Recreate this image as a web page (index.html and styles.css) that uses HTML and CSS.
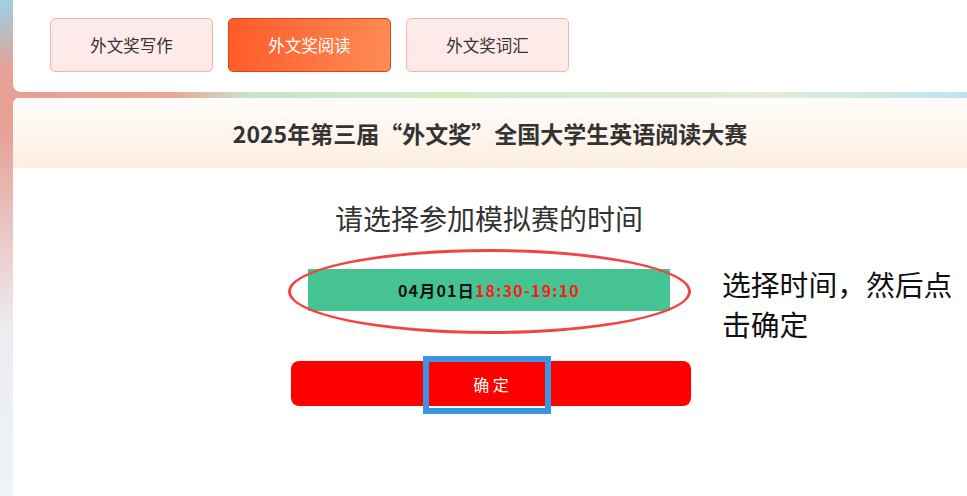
FILE: index.html
```html
<!DOCTYPE html>
<html lang="zh-CN">
<head>
  <meta charset="UTF-8" />
  <title>外文奖模拟赛</title>
  <link rel="stylesheet" href="styles.css">
</head>
<body>

  <!-- Tabs -->
  <div class="top-panel">
    <button class="tab">外文奖写作</button>
    <button class="tab active">外文奖阅读</button>
    <button class="tab">外文奖词汇</button>
  </div>

  <!-- Main -->
  <div class="main-panel">
    <div class="banner">2025年第三届“外文奖”全国大学生英语阅读大赛</div>

    <div class="content">
      <div class="subtitle">请选择参加模拟赛的时间</div>

      <div class="slot-wrap">
        <div class="slot">04月01日<span class="slot-time">18:30-19:10</span></div>
        <div class="mark-ellipse"></div>
      </div>

      <div class="confirm-wrap">
        <button class="confirm-btn">确 定</button>
        <div class="mark-box"></div>
      </div>
    </div>

    <div class="note">选择时间，然后点击确定</div>
  </div>

</body>
</html>
```

FILE: styles.css
```css
body {
  margin: 0;
  padding: 0 0 0 13px;
  height: 496px;
  overflow: hidden;
  font-family: "Noto Sans CJK SC", "Noto Sans", sans-serif;
  color: #333;
  background:
    linear-gradient(to bottom, rgba(238,242,246,0) 0, rgba(238,242,246,0) 130px, #ecedf0 330px, #eef3f7 496px),
    radial-gradient(circle at 0 0, #98d4e6 0, rgba(152,212,230,0) 70px),
    linear-gradient(90deg, #e6a096 0, #e8a898 18%, #c6e6cc 26%, #d6eac6 45%, #e0ecd8 80%, #bfe4f0 100%);
}

.top-panel {
  background: white;
  height: 92px;
  box-sizing: border-box;
  padding: 18px 0 0 37px;
  border-radius: 0 0 0 8px;
  display: flex;
  gap: 15px;
}

.tab {
  width: 163px;
  height: 54px;
  box-sizing: border-box;
  background: #ffeaea;
  border: 1px solid #f7b2aa;
  border-radius: 5px;
  font-family: inherit;
  font-size: 16.5px;
  color: #333;
  cursor: pointer;
}

.tab.active {
  background: linear-gradient(100deg, #ff5a28, #ff8c56);
  border-color: #d8431e;
  color: white;
}

.main-panel {
  position: relative;
  margin-top: 6px;
  height: 398px;
  background: white;
  border-radius: 6px 0 0 0;
  overflow: hidden;
}

.banner {
  height: 70px;
  background: linear-gradient(to bottom, #fffdfb, #fdeee0);
  display: flex;
  align-items: center;
  justify-content: center;
  font-size: 23px;
  font-weight: bold;
  color: #333;
}

.content {
  display: flex;
  flex-direction: column;
  align-items: center;
  padding-right: 2px;
}

.subtitle {
  margin-top: 30px;
  font-size: 28px;
  line-height: 40px;
  color: #333;
}

.slot-wrap {
  position: relative;
  margin-top: 31px;
}

.slot {
  width: 362px;
  height: 42px;
  background: #46c392;
  display: flex;
  align-items: center;
  justify-content: center;
  font-size: 16px;
  font-weight: bold;
  letter-spacing: 1.2px;
  color: #111;
}

.slot-time {
  color: #ff1a1a;
}

.mark-ellipse {
  position: absolute;
  left: -20px;
  top: -20px;
  width: 403px;
  height: 85px;
  box-sizing: border-box;
  border: 3px solid #f24444;
  border-radius: 50%;
}

.confirm-wrap {
  position: relative;
  margin-top: 50px;
  margin-left: 4px;
}

.confirm-btn {
  width: 400px;
  height: 45px;
  background: #ff0000;
  border: none;
  border-radius: 8px;
  color: white;
  font-family: inherit;
  font-size: 16px;
  cursor: pointer;
}

.mark-box {
  position: absolute;
  left: 132px;
  top: -5px;
  width: 128px;
  height: 58px;
  box-sizing: border-box;
  border: 6px solid #3a96e2;
}

.note {
  position: absolute;
  left: 709px;
  top: 166px;
  width: 250px;
  font-size: 28.8px;
  line-height: 40px;
  color: #111;
}
```
